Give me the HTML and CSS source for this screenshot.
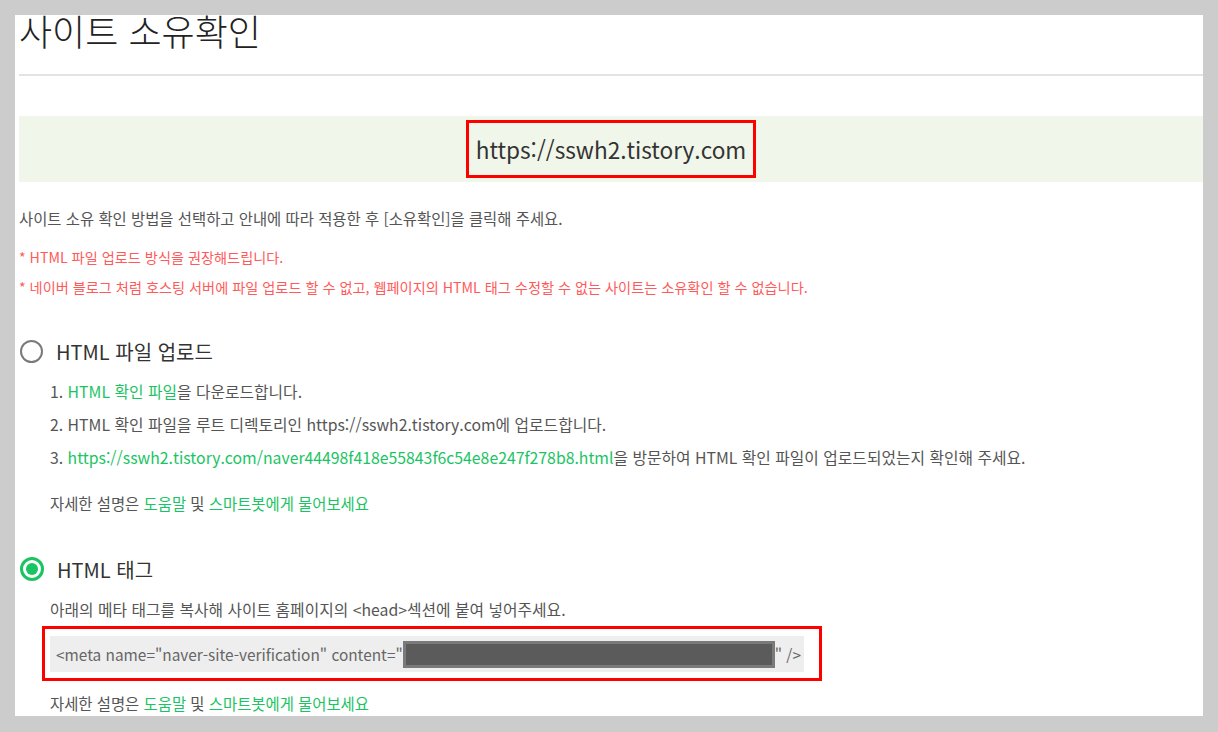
FILE: index.html
```html
<!DOCTYPE html>
<html lang="ko">
<head>
    <meta charset="UTF-8">
    <title>사이트 소유확인</title>
    <link rel="stylesheet" href="styles.css">
</head>
<body>
    <div class="panel">
        <h1 class="title">사이트 소유확인</h1>
        <div class="divider"></div>

        <div class="site-box">
            <span class="site-url">https://sswh2.tistory.com</span>
        </div>

        <p class="desc">사이트 소유 확인 방법을 선택하고 안내에 따라 적용한 후 [소유확인]을 클릭해 주세요.</p>
        <p class="note">* HTML 파일 업로드 방식을 권장해드립니다.</p>
        <p class="note">* 네이버 블로그 처럼 호스팅 서버에 파일 업로드 할 수 없고, 웹페이지의 HTML 태그 수정할 수 없는 사이트는 소유확인 할 수 없습니다.</p>

        <label class="option option-file">
            <span class="radio"></span>
            <span class="option-label">HTML 파일 업로드</span>
        </label>
        <ol class="steps">
            <li>1. <a class="link">HTML 확인 파일</a>을 다운로드합니다.</li>
            <li>2. HTML 확인 파일을 루트 디렉토리인 https://sswh2.tistory.com에 업로드합니다.</li>
            <li>3. <a class="link">https://sswh2.tistory.com/naver44498f418e55843f6c54e8e247f278b8.html</a>을 방문하여 HTML 확인 파일이 업로드되었는지 확인해 주세요.</li>
        </ol>
        <p class="help">자세한 설명은 <a class="link">도움말</a> 및 <a class="link">스마트봇에게 물어보세요</a></p>

        <label class="option option-tag">
            <span class="radio checked"></span>
            <span class="option-label">HTML 태그</span>
        </label>
        <p class="sub">아래의 메타 태그를 복사해 사이트 홈페이지의 &lt;head&gt;섹션에 붙여 넣어주세요.</p>
        <div class="code-frame">
            <div class="code">&lt;meta name="naver-site-verification" content="<span class="redacted"></span>" /&gt;</div>
        </div>
        <p class="help help-last">자세한 설명은 <a class="link">도움말</a> 및 <a class="link">스마트봇에게 물어보세요</a></p>
    </div>
</body>
</html>
```

FILE: styles.css
```css
html, body {
    margin: 0;
    padding: 0;
    height: 732px;
    overflow: hidden;
    background-color: #cccccc;
    font-family: "Noto Sans CJK KR", "Noto Sans", sans-serif;
}

.panel {
    display: flow-root;
    margin: 15px 15px 0 15px;
    height: 701px;
    padding-left: 4px;
    background-color: white;
    color: #555;
}

p {
    margin: 0;
}

.title {
    margin: -5px 0 0 0;
    font-size: 36px;
    line-height: 40px;
    font-weight: 300;
    color: #222;
}

.divider {
    margin-top: 24px;
    border-top: 2px solid #e3e3e3;
}

.site-box {
    margin-top: 40px;
    height: 66px;
    display: flex;
    align-items: center;
    justify-content: center;
    background-color: #f1f6ea;
}

.site-url {
    box-sizing: border-box;
    width: 290px;
    height: 58px;
    display: flex;
    align-items: center;
    justify-content: center;
    border: 3px solid #ff0000;
    font-size: 22.6px;
    color: #333;
}

.desc {
    margin-top: 26px;
    font-size: 15.4px;
    line-height: 20px;
}

.note {
    font-size: 14.2px;
    line-height: 30px;
    color: #ff5a5a;
}

.desc + .note {
    margin-top: 14px;
}

.option {
    display: flex;
    align-items: center;
    height: 30px;
    gap: 13px;
    padding-left: 1px;
}

.option-file {
    margin-top: 34px;
}

.option-tag {
    margin-top: 41px;
}

.radio {
    box-sizing: border-box;
    width: 23px;
    height: 23px;
    border: 2px solid #7a7a7a;
    border-radius: 50%;
    display: flex;
    align-items: center;
    justify-content: center;
}

.radio.checked {
    width: 24px;
    height: 24px;
    border: 3px solid #19c463;
}

.radio.checked::after {
    content: "";
    width: 12px;
    height: 12px;
    border-radius: 50%;
    background-color: #19c463;
}

.option-label {
    font-size: 20px;
    color: #333;
}

.steps {
    list-style: none;
    margin: 9px 0 0 0;
    padding-left: 31px;
    font-size: 15.8px;
    line-height: 33px;
}

.link {
    color: #19c463;
    text-decoration: none;
}

.help {
    margin-top: 19px;
    padding-left: 31px;
    font-size: 15.4px;
    line-height: 20px;
}

.help-last {
    margin-top: 12px;
}

.sub {
    margin-top: 16px;
    padding-left: 31px;
    font-size: 15.8px;
    line-height: 20px;
}

.code-frame {
    margin: 6px 0 0 23px;
    width: 780px;
    box-sizing: border-box;
    border: 3px solid #ff0000;
    padding: 7px 15px 6px 5px;
}

.code {
    height: 36px;
    display: flex;
    align-items: center;
    padding-left: 6px;
    background-color: #eeeeee;
    font-size: 15.4px;
    color: #666;
    white-space: nowrap;
}

.redacted {
    box-sizing: border-box;
    width: 372px;
    height: 27px;
    background-color: #5b5b5b;
    border: 3px solid #7a7a7a;
}
```
